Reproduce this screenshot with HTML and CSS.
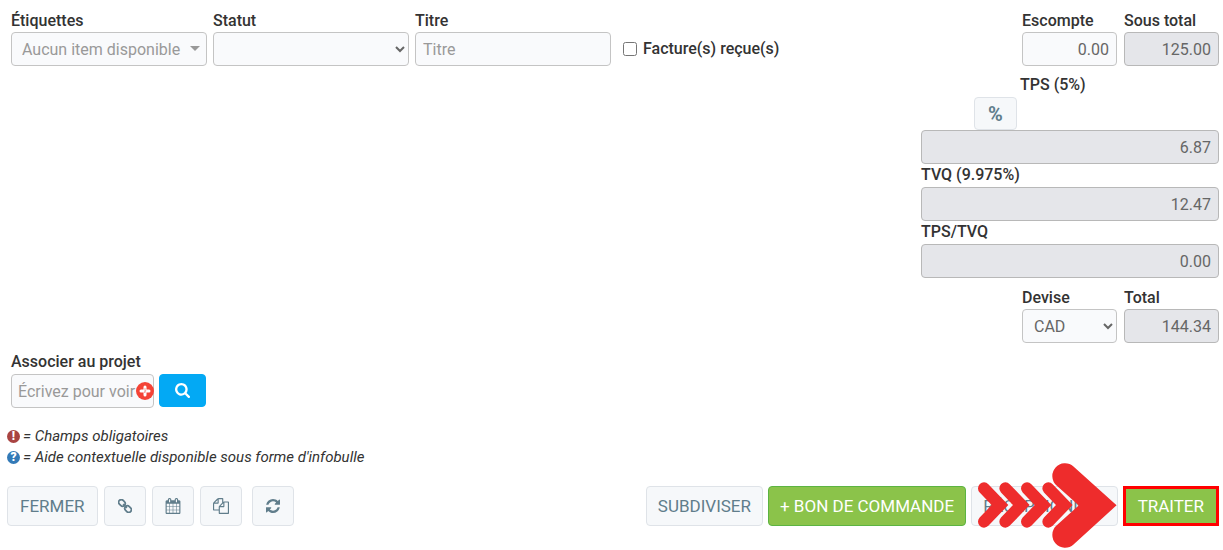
FILE: index.html
```html
<!DOCTYPE html>
<html lang="fr">
<head>
  <meta charset="UTF-8">
  <meta name="viewport" content="width=device-width, initial-scale=1.0">
  <title>Facture</title>
  <link rel="stylesheet" href="styles.css">
</head>
<body>
  <form class="invoice">
    <div class="top">
      <div class="fields">
        <div class="field">
          <label for="tags">Étiquettes</label>
          <div class="tags-select">
            <select id="tags" class="control">
              <option>Aucun item disponible</option>
            </select>
          </div>
        </div>
        <div class="field">
          <label for="status">Statut</label>
          <select id="status" class="control">
            <option></option>
          </select>
        </div>
        <div class="field">
          <label for="title">Titre</label>
          <input id="title" class="control" type="text" placeholder="Titre">
        </div>
        <div class="check">
          <input id="received" type="checkbox">
          <label for="received">Facture(s) reçue(s)</label>
        </div>
      </div>

      <div class="totals">
        <div class="pair">
          <div class="field">
            <label for="discount">Escompte</label>
            <input id="discount" class="control amount" type="text" value="0.00">
          </div>
          <div class="field">
            <label for="subtotal">Sous total</label>
            <input id="subtotal" class="control amount" type="text" value="125.00" readonly>
          </div>
        </div>
        <div class="tax">
          <label class="tps-label" for="tps">TPS (5%)</label>
          <button type="button" class="btn percent">%</button>
          <input id="tps" class="control amount" type="text" value="6.87" readonly>
          <label for="tvq">TVQ (9.975%)</label>
          <input id="tvq" class="control amount" type="text" value="12.47" readonly>
          <label for="tpstvq">TPS/TVQ</label>
          <input id="tpstvq" class="control amount" type="text" value="0.00" readonly>
        </div>
        <div class="pair">
          <div class="field">
            <label for="currency">Devise</label>
            <select id="currency" class="control">
              <option>CAD</option>
            </select>
          </div>
          <div class="field">
            <label for="total">Total</label>
            <input id="total" class="control amount" type="text" value="144.34" readonly>
          </div>
        </div>
      </div>
    </div>

    <div class="project">
      <label for="project">Associer au projet</label>
      <div class="project-row">
        <div class="project-input">
          <input id="project" class="control" type="text" placeholder="Écrivez pour voir la liste">
          <svg class="plus" viewBox="0 0 18 18" aria-hidden="true">
            <circle cx="9" cy="9" r="9" fill="#f44336"/>
            <path d="M9 5v8M5 9h8" stroke="#fff" stroke-width="3" stroke-linecap="round"/>
            <path d="M9 6v5M8 11l2-3" stroke="#f9a29b" stroke-width="1"/>
          </svg>
        </div>
        <button type="button" class="btn search" aria-label="Rechercher">
          <svg viewBox="0 0 1664 1664"><path d="M1152 704q0-185-131.500-316.500T704 256 387.500 387.500 256 704t131.500 316.500T704 1152t316.500-131.500T1152 704zm512 832q0 52-38 90t-90 38q-54 0-90-38l-343-342q-179 124-399 124-143 0-273.500-55.500t-225-150-150-225T0 704t55.500-273.500 150-225 225-150T704 0t273.500 55.500 225 150 150 225T1408 704q0 220-124 399l343 343q37 37 37 90z"/></svg>
        </button>
      </div>
    </div>

    <div class="legend">
      <p><span class="badge required">!</span> = Champs obligatoires</p>
      <p><span class="badge help">?</span> = Aide contextuelle disponible sous forme d'infobulle</p>
    </div>

    <div class="actions">
      <div class="group tools">
        <button type="button" class="btn">FERMER</button>
        <button type="button" class="btn icon" aria-label="Lien">
          <svg class="link" viewBox="0 0 16 16">
            <g transform="rotate(45 8 8)">
              <rect x="-1" y="5" width="8" height="6" rx="3"/>
              <rect x="9" y="5" width="8" height="6" rx="3"/>
              <path d="M5 8h6"/>
            </g>
          </svg>
        </button>
        <button type="button" class="btn icon" aria-label="Calendrier">
          <svg viewBox="0 0 1792 1792"><path d="M192 1664h288v-288H192v288zm352 0h320v-288H544v288zM192 1312h288V992H192v320zm352 0h320V992H544v320zM192 928h288V640H192v288zm736 736h320v-288H928v288zM544 928h320V640H544v288zm768 736h288v-288h-288v288zm-384-352h320V992H928v320zM576 448V160q0-13-9.500-22.500T544 128h-64q-13 0-22.500 9.500T448 160v288q0 13 9.500 22.500T480 480h64q13 0 22.500-9.500T576 448zm736 864h288V992h-288v320zM928 928h320V640H928v288zm384 0h288V640h-288v288zm32-480V160q0-13-9.500-22.500T1312 128h-64q-13 0-22.500 9.500T1216 160v288q0 13 9.500 22.500t22.500 9.500h64q13 0 22.500-9.500t9.500-22.500zm384-64v1280q0 52-38 90t-90 38H192q-52 0-90-38t-38-90V384q0-52 38-90t90-38h128v-96q0-66 47-113T480 0h64q66 0 113 47t47 113v96h384v-96q0-66 47-113t113-47h64q66 0 113 47t47 113v96h128q52 0 90 38t38 90z"/></svg>
        </button>
        <button type="button" class="btn icon" aria-label="Copier">
          <svg viewBox="0 0 1792 1792"><path d="M1696 384q40 0 68 28t28 68v1216q0 40-28 68t-68 28H736q-40 0-68-28t-28-68v-288H96q-40 0-68-28t-28-68V640q0-40 20-88t48-76L476 68q28-28 76-48t88-20h416q40 0 68 28t28 68v328q68-40 128-40h416zm-544 213L853 896h299V597zM512 213L213 512h299V213zm196 647l316-316V128H640v416q0 40-28 68t-68 28H128v640h512v-256q0-40 20-88t48-76zm956 804V512h-384v416q0 40-28 68t-68 28H768v640h896z"/></svg>
        </button>
        <button type="button" class="btn icon refresh" aria-label="Actualiser">
          <svg viewBox="128 128 1536 1536"><path d="M1639 1056q0 5-1 7-64 268-268 434.500T892 1664q-146 0-282.500-55T366 1452l-129 129q-19 19-45 19t-45-19-19-45v-448q0-26 19-45t45-19h448q26 0 45 19t19 45-19 45l-137 137q71 66 161 102t187 36q134 0 250-65t186-179q11-17 53-117 8-23 30-23h192q13 0 22.500 9.500t9.500 22.500zm25-800v448q0 26-19 45t-45 19h-448q-26 0-45-19t-19-45 19-45l138-138q-148-137-349-137-134 0-250 65T460 628q-11 17-53 117-8 23-30 23H178q-13 0-22.500-9.500T146 736v-7q65-268 270-434.500T896 128q146 0 284 55.500T1425 340l130-129q19-19 45-19t45 19 19 45z"/></svg>
        </button>
      </div>
      <div class="group">
        <button type="button" class="btn">SUBDIVISER</button>
        <button type="button" class="btn green">+ BON DE COMMANDE</button>
        <div class="pointed">
          <button type="button" class="btn">RÉCEPTIONNER</button>
          <!-- arrow pointing at the process button -->
          <svg class="arrow" viewBox="54 26 417 255" fill="none" stroke="#ee2c2c" stroke-linecap="round" aria-hidden="true">
            <g stroke-width="36">
              <path d="M72 102L120 152L72 202"/>
              <path d="M136 102L184 152L136 202"/>
              <path d="M201 102L249 152L201 202"/>
              <path d="M265 102L313 152L265 202"/>
            </g>
            <path stroke-width="76" d="M315 65L413 153L315 242"/>
          </svg>
        </div>
        <button type="submit" class="btn green process">TRAITER</button>
      </div>
    </div>
  </form>
</body>
</html>
```
FILE: styles.css
```css
* {
  box-sizing: border-box;
}
body {
  margin: 0;
  font-family: Roboto, "Liberation Sans", sans-serif;
  font-size: 16px;
  line-height: 20px;
  color: #333;
  background-color: #fff;
}
.invoice {
  min-height: 100vh;
  padding: 11px 4px 22px 11px;
}
label {
  font-weight: 500;
}
.top {
  display: flex;
  justify-content: space-between;
}
.fields {
  display: flex;
  align-items: flex-start;
  gap: 6px;
}
.field {
  display: flex;
  flex-direction: column;
  gap: 1px;
}
.fields .field {
  width: 196px;
}
.control {
  display: block;
  width: 100%;
  height: 34px;
  padding: 0 7px;
  border: 1px solid #c4c4c4;
  border-radius: 4px;
  background-color: #f9fafc;
  color: #666;
  font-family: inherit;
  font-size: 16px;
}
.control::placeholder {
  color: #999;
  opacity: 1;
}
.control:read-only:not(select) {
  background-color: #e5e6ea;
  border-color: #b8b8b8;
}
.amount {
  text-align: right;
}

/* Liste des étiquettes */
.tags-select {
  position: relative;
}
.tags-select .control {
  appearance: none;
  padding-left: 10px;
  color: #999;
}
.tags-select::after {
  content: "";
  position: absolute;
  top: 14px;
  right: 7px;
  border: 5px solid transparent;
  border-top-color: #999;
  border-bottom: 0;
  pointer-events: none;
}
.check {
  display: flex;
  align-items: center;
  gap: 6px;
  padding: 28px 0 0 6px;
}
.check input {
  width: 14px;
  height: 14px;
  margin: 0;
}

/* Totaux */
.totals {
  display: flex;
  flex-direction: column;
  width: 298px;
}
.pair {
  display: flex;
  justify-content: flex-end;
  gap: 7px;
}
.pair .field {
  width: 95px;
}
.tax {
  display: flex;
  flex-direction: column;
  padding: 9px 0;
}
.tax .control {
  margin-bottom: 1px;
}
.tax label {
  margin-bottom: 2px;
}
.tax .tps-label {
  margin-left: 99px;
}

/* Boutons */
.btn {
  height: 40px;
  padding: 0 11px;
  border: 1px solid #dfe3e8;
  border-radius: 4px;
  background-color: #f6f8fa;
  color: #607d8b;
  font-family: inherit;
  font-size: 17px;
  white-space: nowrap;
}
.btn svg {
  display: block;
  margin: 0 auto;
  fill: currentColor;
}
.percent {
  width: 43px;
  height: 33px;
  margin-left: 53px;
  padding: 0;
  font-size: 20px;
  font-weight: bold;
}

/* Projet */
.project {
  padding-top: 9px;
}
.project-row {
  display: flex;
  gap: 5px;
  padding-top: 2px;
}
.project-input {
  position: relative;
  width: 143px;
}
.project-input .control {
  padding: 0 16px 0 6px;
}
.plus {
  position: absolute;
  top: 8px;
  right: 0;
  width: 18px;
  height: 18px;
}
.search {
  width: 47px;
  height: 33px;
  padding: 0;
  border-color: #03a9f4;
  background-color: #03a9f4;
  color: #fff;
}
.search svg {
  width: 15px;
  height: 15px;
}

.legend {
  margin-left: -4px;
  padding-top: 18px;
  font-style: italic;
}
.legend p {
  display: flex;
  align-items: center;
  gap: 3px;
  margin: 0;
  font-size: 15px;
  line-height: 21px;
}
.badge {
  width: 13px;
  height: 13px;
  border-radius: 50%;
  color: #fff;
  font-size: 12px;
  font-style: normal;
  font-weight: 900;
  line-height: 13px;
  text-align: center;
}
.required {
  background-color: #a94442;
}
.help {
  background-color: #337ab7;
}

/* Barre d'actions */
.actions {
  display: flex;
  justify-content: space-between;
  margin-left: -4px;
  padding-top: 18px;
}
.group {
  display: flex;
  gap: 5px;
}
.tools {
  gap: 6px;
}
.tools .btn {
  padding: 0 12px;
}
.tools .icon {
  width: 42px;
  padding: 0;
}
.icon svg {
  width: 16px;
  height: 16px;
}
.icon .link {
  width: 14px;
  height: 14px;
  fill: none;
  stroke: currentColor;
  stroke-width: 2;
}
.refresh {
  margin-left: 4px;
}
.refresh svg {
  width: 14px;
  height: 14px;
}
.green {
  border-color: #5cb442;
  background-color: #8bc34a;
  color: #fff;
}
.process {
  padding: 0 12px;
  border: 3px solid #f00;
  border-radius: 0;
}
.pointed {
  position: relative;
}
.arrow {
  position: absolute;
  top: -23px;
  left: 7px;
  width: 139px;
  height: 85px;
}
```
